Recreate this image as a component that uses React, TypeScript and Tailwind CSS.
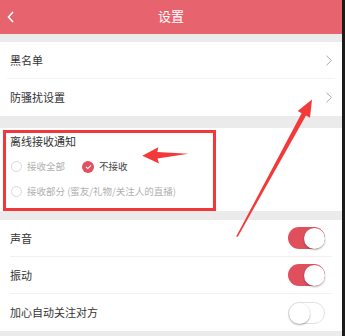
import React from 'react'

const font = { fontFamily: '"Noto Sans CJK SC", "Noto Sans", sans-serif' }

const Chevron = () => (
  <svg width="8" height="11" viewBox="0 0 8 11" className="shrink-0">
    <path d="M1.5 0.8 L6.5 5.5 L1.5 10.2" fill="none" stroke="#a8a8a8" strokeWidth="1" />
  </svg>
)

const Toggle = ({ on }: { on: boolean }) => (
  <div
    className={`relative w-[37px] h-[22px] rounded-full ${
      on ? 'bg-[#e04f5c]' : 'bg-white border border-[#e2e2e2]'
    }`}
  >
    <div
      className={`absolute top-[0.5px] w-[21px] h-[21px] rounded-full bg-white shadow-[0_1px_2px_rgba(0,0,0,0.35)] ${
        on ? 'right-[0.5px]' : 'left-0 -top-[0.5px]'
      }`}
    />
  </div>
)

const Radio = ({ checked, label }: { checked?: boolean; label: string }) => (
  <div className="flex items-center gap-[5px]">
    {checked ? (
      <span className="w-[12px] h-[12px] rounded-full bg-[#e0525f] flex items-center justify-center">
        <svg width="7" height="6" viewBox="0 0 7 6">
          <path d="M1 3 L2.8 4.6 L6 1.3" fill="none" stroke="#fff" strokeWidth="1.1" />
        </svg>
      </span>
    ) : (
      <span className="w-[11px] h-[11px] rounded-full border border-[#d8d8d8] bg-white" />
    )}
    <span className={`text-[9.5px] whitespace-nowrap ${checked ? 'text-[#444]' : 'text-[#b0b0b0]'}`}>{label}</span>
  </div>
)

const LinkRow = ({ label, last }: { label: string; last?: boolean }) => (
  <div className={`h-[37px] mx-[7px] flex items-center justify-between pl-[3px] pr-[2px] ${last ? '' : 'border-b border-[#f3f3f3]'}`}>
    <span className="text-[11px] text-[#333]">{label}</span>
    <Chevron />
  </div>
)

const SwitchRow = ({ label, on, last }: { label: string; on: boolean; last?: boolean }) => (
  <div className={`h-[37px] mx-[10px] flex items-center justify-between pr-[7px] ${last ? '' : 'border-b border-[#f1f1f1]'}`}>
    <span className="text-[11px] text-[#333]">{label}</span>
    <Toggle on={on} />
  </div>
)

export default function App() {
  return (
    <div className="w-[345px] h-[336px] bg-[#1b1b1b] flex overflow-hidden" style={font}>
      <div className="relative w-[342px] h-full bg-[#ebebeb] flex flex-col">
        {/* Header */}
        <div className="h-[34px] bg-[#e7646e] flex items-center relative shrink-0">
          <svg width="8" height="12" viewBox="0 0 8 12" className="absolute left-[7px] top-[11px]">
            <path d="M6 1 L1.5 6 L6 11" fill="none" stroke="#fff" strokeWidth="1.6" />
          </svg>
          <span className="w-full text-center text-[13px] text-white -mt-[2px]">设置</span>
        </div>

        <div className="h-[8px] shrink-0" />

        <div className="bg-white shrink-0">
          <LinkRow label="黑名单" />
          <LinkRow label="防骚扰设置" last />
        </div>

        <div className="h-[12px] shrink-0" />

        {/* Offline notification */}
        <div className="relative bg-white h-[83px] pt-[1px] pl-[10px] shrink-0">
          <div className="h-[25px] flex items-center text-[11px] text-[#333]">离线接收通知</div>
          <div className="h-[25px] flex items-center gap-[17px] pl-[1px]">
            <Radio label="接收全部" />
            <Radio checked label="不接收" />
          </div>
          <div className="h-[25px] flex items-center pl-[1px]">
            <Radio label="接收部分 (蜜友/礼物/关注人的直播)" />
          </div>
          <div className="absolute left-[3px] top-[2px] w-[213px] h-[81px] border-[3px] border-[#f2383b]" />
        </div>

        <div className="h-[9px] shrink-0" />

        <div className="bg-white shrink-0">
          <SwitchRow label="声音" on />
          <SwitchRow label="振动" on />
          <SwitchRow label="加心自动关注对方" on={false} last />
        </div>

        {/* Annotation arrows */}
        <svg className="absolute left-0 top-0 pointer-events-none" width="342" height="336" viewBox="0 0 342 336">
          <polygon
            points="236.2,236.5 237.8,236.8 306,115.6 310,117.8 312,99.5 297.7,111 301.6,113.2"
            fill="#f33a3a"
          />
          <polygon
            points="142.3,155.7 158.3,147.3 157.3,152 188.5,153.8 157.5,158.4 159,163.5"
            fill="#f33a3a"
          />
        </svg>
      </div>
    </div>
  )
}
